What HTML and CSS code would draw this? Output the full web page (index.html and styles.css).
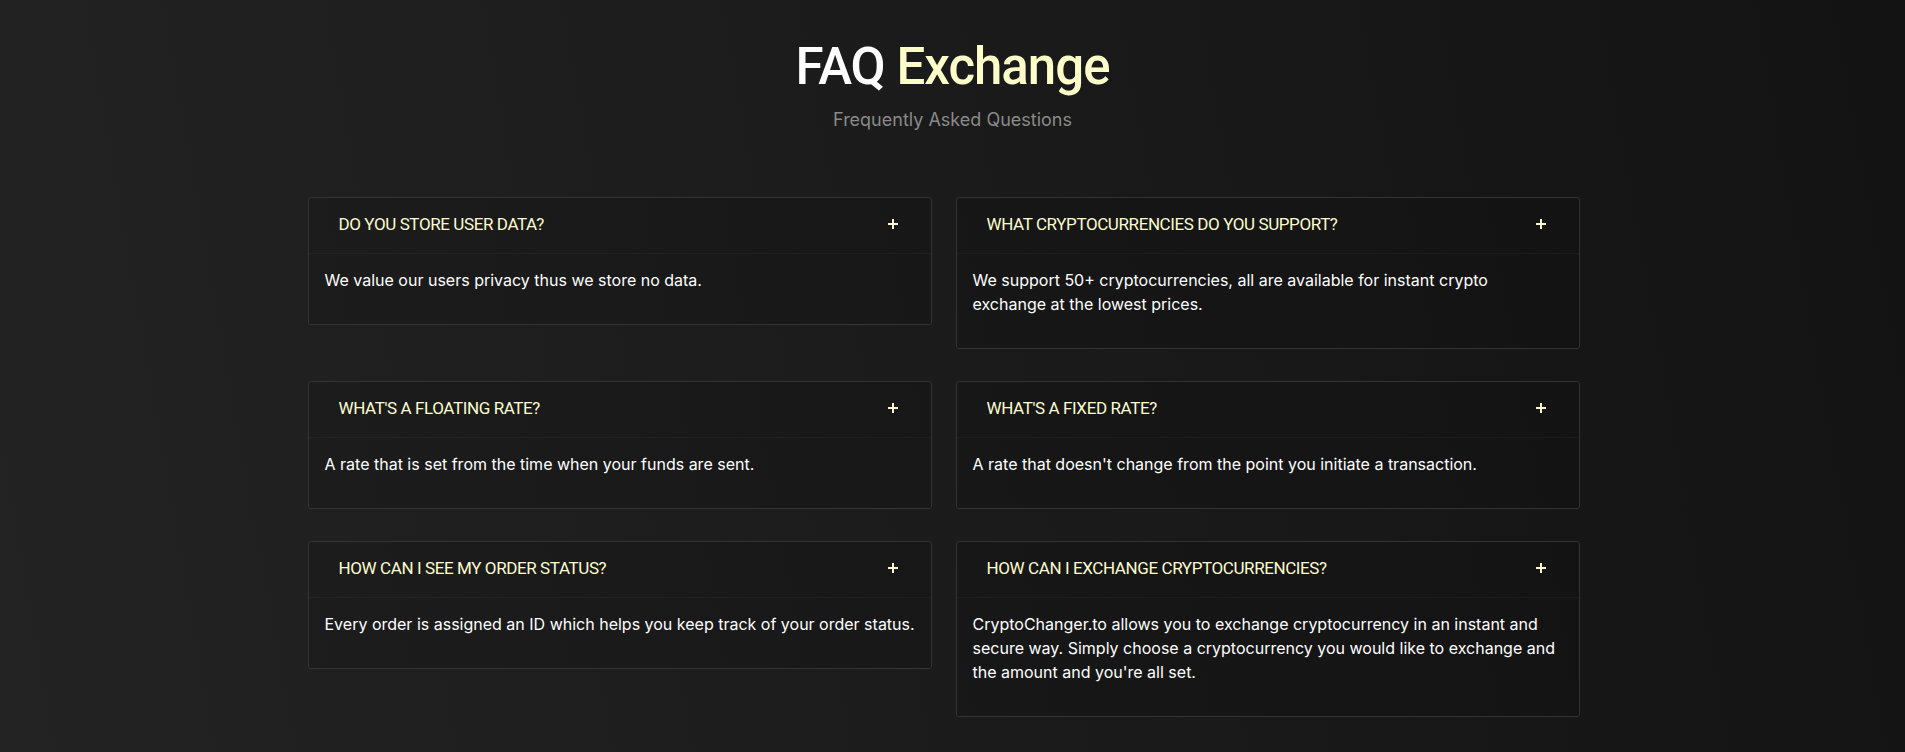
FILE: index.html
```html
<!DOCTYPE html>
<html lang="en">
  <head>
    <meta charset="UTF-8" />
    <meta name="viewport" content="width=device-width, initial-scale=1.0" />
    <title>FAQ Exchange</title>
    <link rel="stylesheet" href="styles.css">
  </head>
  <body>
    <section class="faq">
      <header class="faq-head">
        <h1 class="title">FAQ <span class="accent">Exchange</span></h1>
        <p class="subtitle">Frequently Asked Questions</p>
      </header>

      <div class="faq-grid">
        <div class="item">
          <div class="question">
            <span>Do you store user data?</span>
            <i class="plus"></i>
          </div>
          <div class="answer">We value our users privacy thus we store no data.</div>
        </div>

        <div class="item">
          <div class="question">
            <span>What cryptocurrencies do you support?</span>
            <i class="plus"></i>
          </div>
          <div class="answer">We support 50+ cryptocurrencies, all are available for instant crypto exchange at the lowest prices.</div>
        </div>

        <div class="item">
          <div class="question">
            <span>What's a floating rate?</span>
            <i class="plus"></i>
          </div>
          <div class="answer">A rate that is set from the time when your funds are sent.</div>
        </div>

        <div class="item">
          <div class="question">
            <span>What's a fixed rate?</span>
            <i class="plus"></i>
          </div>
          <div class="answer">A rate that doesn't change from the point you initiate a transaction.</div>
        </div>

        <div class="item">
          <div class="question">
            <span>How can I see my order status?</span>
            <i class="plus"></i>
          </div>
          <div class="answer">Every order is assigned an ID which helps you keep track of your order status.</div>
        </div>

        <div class="item">
          <div class="question">
            <span>How can I exchange cryptocurrencies?</span>
            <i class="plus"></i>
          </div>
          <div class="answer">CryptoChanger.to allows you to exchange cryptocurrency in an instant and secure way. Simply choose a cryptocurrency you would like to exchange and the amount and you're all set.</div>
        </div>
      </div>
    </section>
  </body>
</html>
```

FILE: styles.css
```css
/* Resets */
html,
body {
  margin: 0;
  height: 100%;
}

body {
  background: linear-gradient(80deg, #232323 0%, #1b1b1b 50%, #131313 100%);
  font-family: Inter, "Noto Sans", sans-serif;
  color: #fff;
}

/* Header */
.faq {
  padding-top: 38px;
}
.faq-head {
  text-align: center;
}
.title {
  margin: 0;
  font-family: Roboto, sans-serif;
  font-size: 51px;
  font-weight: 500;
  line-height: 58px;
  letter-spacing: -1px;
  color: #fff;
}
.title .accent {
  color: #fdfdc9;
}
.subtitle {
  margin: 12px 0 0;
  font-size: 18px;
  line-height: 24px;
  color: #8a8a8a;
}

/* Grid */
.faq-grid {
  max-width: 1290px;
  margin: 65px auto 0;
  display: grid;
  grid-template-columns: 624px 624px;
  column-gap: 24px;
  row-gap: 32px;
  align-items: start;
}

/* Items */
.item {
  background: rgba(0, 0, 0, 0.12);
  border: 1px solid #333;
  border-radius: 3px;
}
.question {
  height: 52px;
  padding: 0 33px 3px 30px;
  display: flex;
  align-items: center;
  justify-content: space-between;
  border-bottom: 1px solid rgba(255, 255, 255, 0.03);
  font-family: Roboto, sans-serif;
  font-size: 17px;
  text-transform: uppercase;
  letter-spacing: -0.4px;
  color: #fdfcd0;
}
.plus {
  position: relative;
  width: 10px;
  height: 10px;
}
.plus::before,
.plus::after {
  content: "";
  position: absolute;
  background: #fdfcd0;
}
.plus::before {
  left: 0;
  top: 4px;
  width: 10px;
  height: 2px;
}
.plus::after {
  left: 4px;
  top: 0;
  width: 2px;
  height: 10px;
}
.answer {
  padding: 14px 15px 32px 16px;
  font-size: 16px;
  line-height: 24px;
  color: #fff;
}
```
